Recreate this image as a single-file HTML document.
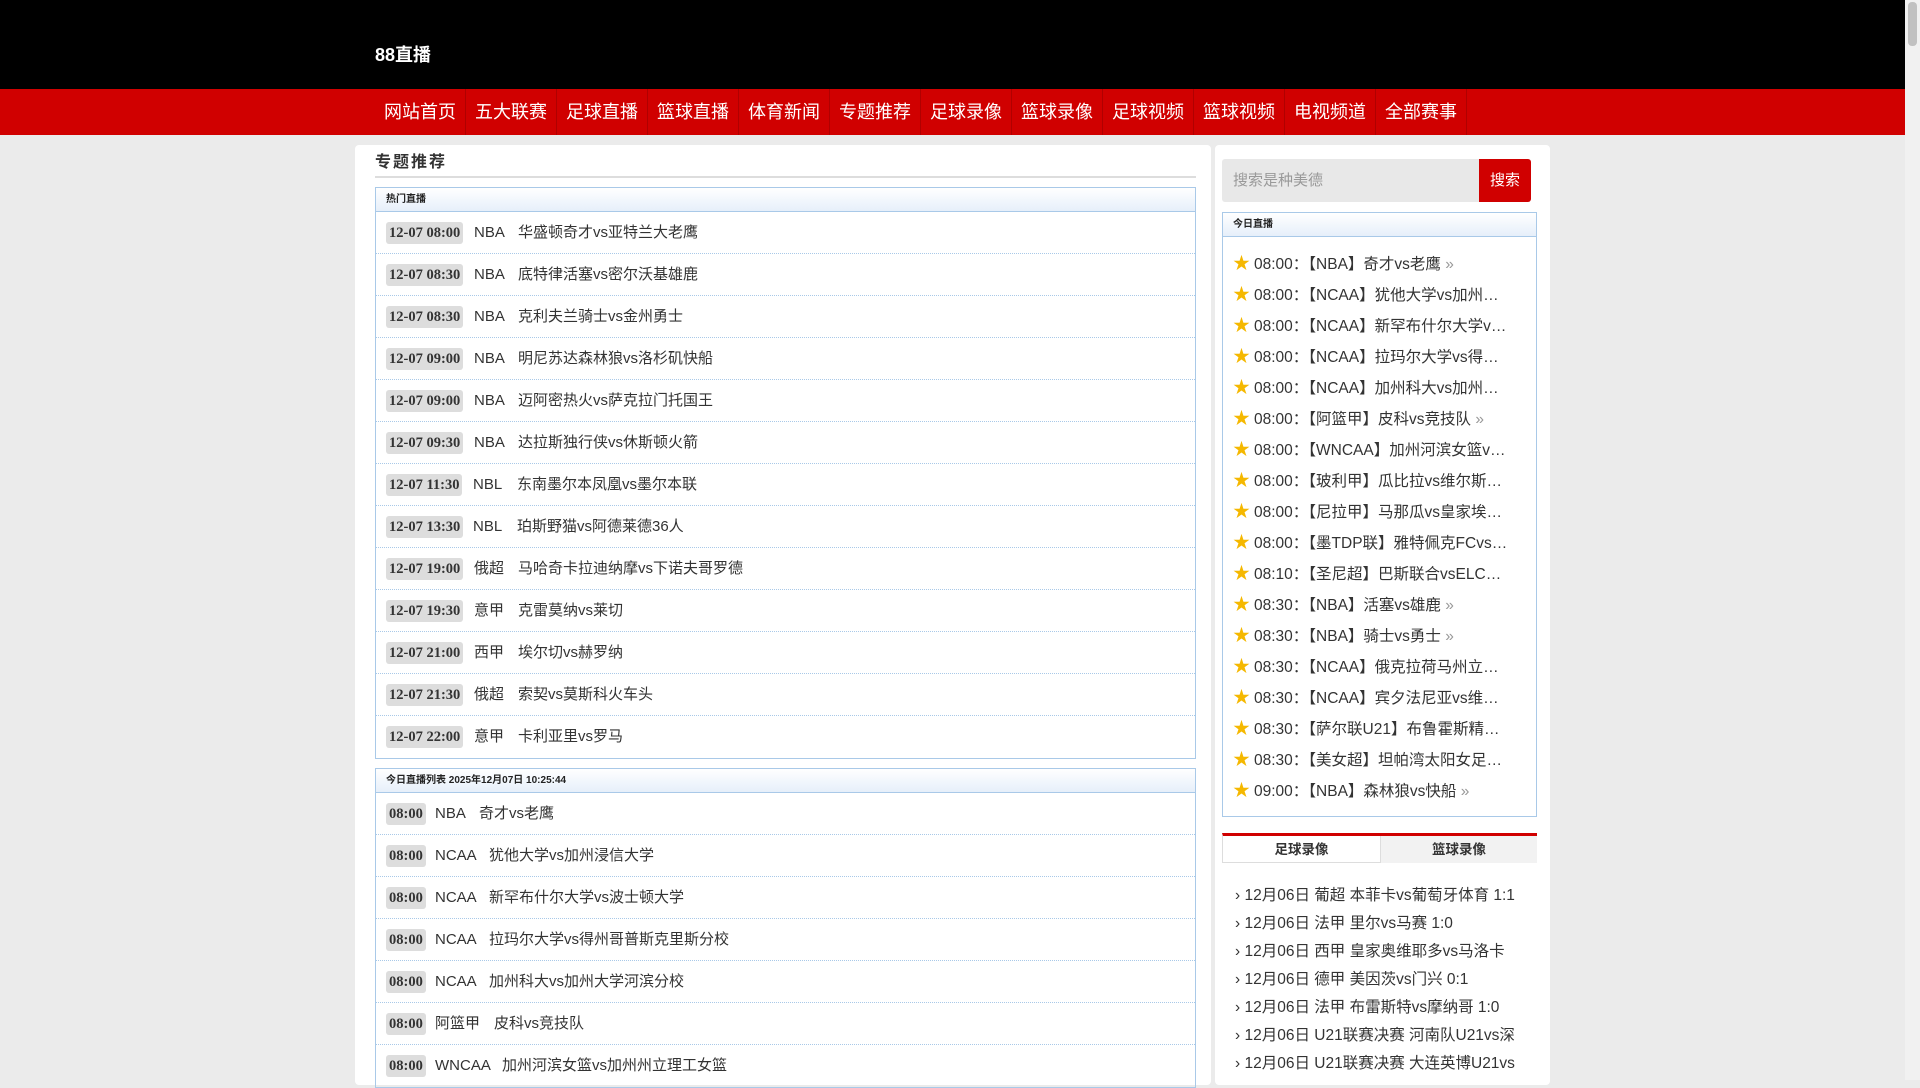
<!DOCTYPE html>
<html><head><meta charset="utf-8"><style>
*{margin:0;padding:0;box-sizing:border-box}
body{width:1920px;height:1080px;overflow:hidden;background:#ebebeb;font-family:"Liberation Sans","Noto Sans CJK SC",sans-serif;color:#333;position:relative}
.hd{position:absolute;left:0;top:0;width:1905px;height:89px;background:#000}
.logo{position:absolute;left:375px;top:41px;color:#fff;font-size:18px;font-weight:bold}
.nav{position:absolute;left:0;top:89px;width:1905px;height:46px;background:#d00000}
.nav a{position:absolute;top:0;height:46px;line-height:46px;width:91px;text-align:center;color:#fff;font-size:18px;border-right:1px solid #b00000}
.sb{position:absolute;right:0;top:0;width:15px;height:1080px;background:#f1f1f1}
.sb i{position:absolute;left:3px;top:2px;width:9px;height:44px;background:#c1c1c1;border-radius:4px}
.lp{position:absolute;left:355px;top:145px;width:856px;height:940px;background:#fff;border-radius:4px}
.title{position:absolute;left:20px;top:3px;font-size:16px;font-weight:bold;letter-spacing:2px;color:#333}
.line{position:absolute;left:20px;right:15px;top:31px;border-top:2px solid #ddd}
.box{position:absolute;left:20px;width:821px;border:1px solid #a9c9e8}
.bh{height:24px;line-height:24px;background:linear-gradient(#fff,#e6effa);border-bottom:1px solid #a9c9e8;font-size:10px;font-weight:bold;padding-left:10px;color:#222}
.row{height:42px;line-height:42px;border-bottom:1px dotted #a9c9e8;position:relative;font-size:15px;color:#333}
.row:last-child{border-bottom:none}
.d{position:absolute;left:10px;top:10px;height:22px;line-height:22px;padding:0 3px;background:#ddd;border-radius:3px;font-family:"Liberation Serif",serif;font-weight:bold;font-size:14.5px;color:#333}
.row span.t{position:absolute;top:0}
.rp{position:absolute;left:1215px;top:145px;width:335px;height:940px;background:#fff;border-radius:4px}
.si{position:absolute;left:7px;top:14px;width:257px;height:43px;background:#e8e8e8;border-radius:3px 0 0 3px;color:#999;font-size:15px;line-height:43px;padding-left:11px}
.sbtn{position:absolute;left:264px;top:14px;width:52px;height:43px;background:#d00000;color:#fff;font-size:15px;line-height:43px;text-align:center;border-radius:0 3px 3px 0}
.tb{position:absolute;left:7px;top:67px;width:315px;height:605px;border:1px solid #a9c9e8}
.li{position:absolute;left:10px;font-size:15.5px;color:#333;white-space:nowrap}
.li b{color:#f5b800;font-size:17px;font-weight:normal;margin-right:4px}
.li em{font-style:normal;color:#999}
.tabs{position:absolute;left:7px;top:688px;width:315px;height:30px;border-top:3px solid #d00000;border-bottom:1px solid #ddd;border-left:1px solid #ddd}
.tabs div{float:left;width:157px;height:27px;line-height:27px;text-align:center;font-size:13.5px;font-weight:bold;color:#333}
.tabs div+div{background:#f2f2f2;border-left:1px solid #ddd}
.vl{position:absolute;left:20px;font-size:15.5px;color:#333;white-space:nowrap}
</style></head><body>
<div class="hd"><div class="logo">88直播</div></div>
<div class="nav">
<a style="left:375px">网站首页</a><a style="left:466px">五大联赛</a><a style="left:557px">足球直播</a><a style="left:648px">篮球直播</a><a style="left:739px">体育新闻</a><a style="left:830px">专题推荐</a><a style="left:921px">足球录像</a><a style="left:1012px">篮球录像</a><a style="left:1103px">足球视频</a><a style="left:1194px">篮球视频</a><a style="left:1285px">电视频道</a><a style="left:1376px">全部赛事</a>
</div>
<div class="sb"><i></i></div>
<div class="lp">
<div class="title">专题推荐</div><div class="line"></div>
<div class="box" style="top:42px">
<div class="bh">热门直播</div>
<div class="row"><span class="d">12-07 08:00</span><span class="t" style="left:98px">NBA</span><span class="t" style="left:142px">华盛顿奇才vs亚特兰大老鹰</span></div>
<div class="row"><span class="d">12-07 08:30</span><span class="t" style="left:98px">NBA</span><span class="t" style="left:142px">底特律活塞vs密尔沃基雄鹿</span></div>
<div class="row"><span class="d">12-07 08:30</span><span class="t" style="left:98px">NBA</span><span class="t" style="left:142px">克利夫兰骑士vs金州勇士</span></div>
<div class="row"><span class="d">12-07 09:00</span><span class="t" style="left:98px">NBA</span><span class="t" style="left:142px">明尼苏达森林狼vs洛杉矶快船</span></div>
<div class="row"><span class="d">12-07 09:00</span><span class="t" style="left:98px">NBA</span><span class="t" style="left:142px">迈阿密热火vs萨克拉门托国王</span></div>
<div class="row"><span class="d">12-07 09:30</span><span class="t" style="left:98px">NBA</span><span class="t" style="left:142px">达拉斯独行侠vs休斯顿火箭</span></div>
<div class="row"><span class="d">12-07 11:30</span><span class="t" style="left:97px">NBL</span><span class="t" style="left:141px">东南墨尔本凤凰vs墨尔本联</span></div>
<div class="row"><span class="d">12-07 13:30</span><span class="t" style="left:97px">NBL</span><span class="t" style="left:141px">珀斯野猫vs阿德莱德36人</span></div>
<div class="row"><span class="d">12-07 19:00</span><span class="t" style="left:98px">俄超</span><span class="t" style="left:142px">马哈奇卡拉迪纳摩vs下诺夫哥罗德</span></div>
<div class="row"><span class="d">12-07 19:30</span><span class="t" style="left:98px">意甲</span><span class="t" style="left:142px">克雷莫纳vs莱切</span></div>
<div class="row"><span class="d">12-07 21:00</span><span class="t" style="left:98px">西甲</span><span class="t" style="left:142px">埃尔切vs赫罗纳</span></div>
<div class="row"><span class="d">12-07 21:30</span><span class="t" style="left:98px">俄超</span><span class="t" style="left:142px">索契vs莫斯科火车头</span></div>
<div class="row"><span class="d">12-07 22:00</span><span class="t" style="left:98px">意甲</span><span class="t" style="left:142px">卡利亚里vs罗马</span></div>
</div>
<div class="box" style="top:623px">
<div class="bh">今日直播列表 2025年12月07日 10:25:44</div>
<div class="row"><span class="d">08:00</span><span class="t" style="left:59px">NBA</span><span class="t" style="left:103px">奇才vs老鹰</span></div>
<div class="row"><span class="d">08:00</span><span class="t" style="left:59px">NCAA</span><span class="t" style="left:113px">犹他大学vs加州浸信大学</span></div>
<div class="row"><span class="d">08:00</span><span class="t" style="left:59px">NCAA</span><span class="t" style="left:113px">新罕布什尔大学vs波士顿大学</span></div>
<div class="row"><span class="d">08:00</span><span class="t" style="left:59px">NCAA</span><span class="t" style="left:113px">拉玛尔大学vs得州哥普斯克里斯分校</span></div>
<div class="row"><span class="d">08:00</span><span class="t" style="left:59px">NCAA</span><span class="t" style="left:113px">加州科大vs加州大学河滨分校</span></div>
<div class="row"><span class="d">08:00</span><span class="t" style="left:59px">阿篮甲</span><span class="t" style="left:118px">皮科vs竞技队</span></div>
<div class="row"><span class="d">08:00</span><span class="t" style="left:59px">WNCAA</span><span class="t" style="left:126px">加州河滨女篮vs加州州立理工女篮</span></div>
</div>
</div>
<div class="rp">
<div class="si">搜索是种美德</div><div class="sbtn">搜索</div>
<div class="tb"><div class="bh">今日直播</div>
<div class="li" style="top:36px"><b>★</b>08:00：【NBA】奇才vs老鹰 <em>»</em></div>
<div class="li" style="top:67px"><b>★</b>08:00：【NCAA】犹他大学vs加州…</div>
<div class="li" style="top:98px"><b>★</b>08:00：【NCAA】新罕布什尔大学v…</div>
<div class="li" style="top:129px"><b>★</b>08:00：【NCAA】拉玛尔大学vs得…</div>
<div class="li" style="top:160px"><b>★</b>08:00：【NCAA】加州科大vs加州…</div>
<div class="li" style="top:191px"><b>★</b>08:00：【阿篮甲】皮科vs竞技队 <em>»</em></div>
<div class="li" style="top:222px"><b>★</b>08:00：【WNCAA】加州河滨女篮v…</div>
<div class="li" style="top:253px"><b>★</b>08:00：【玻利甲】瓜比拉vs维尔斯…</div>
<div class="li" style="top:284px"><b>★</b>08:00：【尼拉甲】马那瓜vs皇家埃…</div>
<div class="li" style="top:315px"><b>★</b>08:00：【墨TDP联】雅特佩克FCvs…</div>
<div class="li" style="top:346px"><b>★</b>08:10：【圣尼超】巴斯联合vsELC…</div>
<div class="li" style="top:377px"><b>★</b>08:30：【NBA】活塞vs雄鹿 <em>»</em></div>
<div class="li" style="top:408px"><b>★</b>08:30：【NBA】骑士vs勇士 <em>»</em></div>
<div class="li" style="top:439px"><b>★</b>08:30：【NCAA】俄克拉荷马州立…</div>
<div class="li" style="top:470px"><b>★</b>08:30：【NCAA】宾夕法尼亚vs维…</div>
<div class="li" style="top:501px"><b>★</b>08:30：【萨尔联U21】布鲁霍斯精…</div>
<div class="li" style="top:532px"><b>★</b>08:30：【美女超】坦帕湾太阳女足…</div>
<div class="li" style="top:563px"><b>★</b>09:00：【NBA】森林狼vs快船 <em>»</em></div>
</div>
<div class="tabs"><div>足球录像</div><div>篮球录像</div></div>
<div class="vl" style="top:738px">› 12月06日 葡超 本菲卡vs葡萄牙体育 1:1</div>
<div class="vl" style="top:766px">› 12月06日 法甲 里尔vs马赛 1:0</div>
<div class="vl" style="top:794px">› 12月06日 西甲 皇家奥维耶多vs马洛卡</div>
<div class="vl" style="top:822px">› 12月06日 德甲 美因茨vs门兴 0:1</div>
<div class="vl" style="top:850px">› 12月06日 法甲 布雷斯特vs摩纳哥 1:0</div>
<div class="vl" style="top:878px">› 12月06日 U21联赛决赛 河南队U21vs深</div>
<div class="vl" style="top:906px">› 12月06日 U21联赛决赛 大连英博U21vs</div>
</div>
</body></html>
